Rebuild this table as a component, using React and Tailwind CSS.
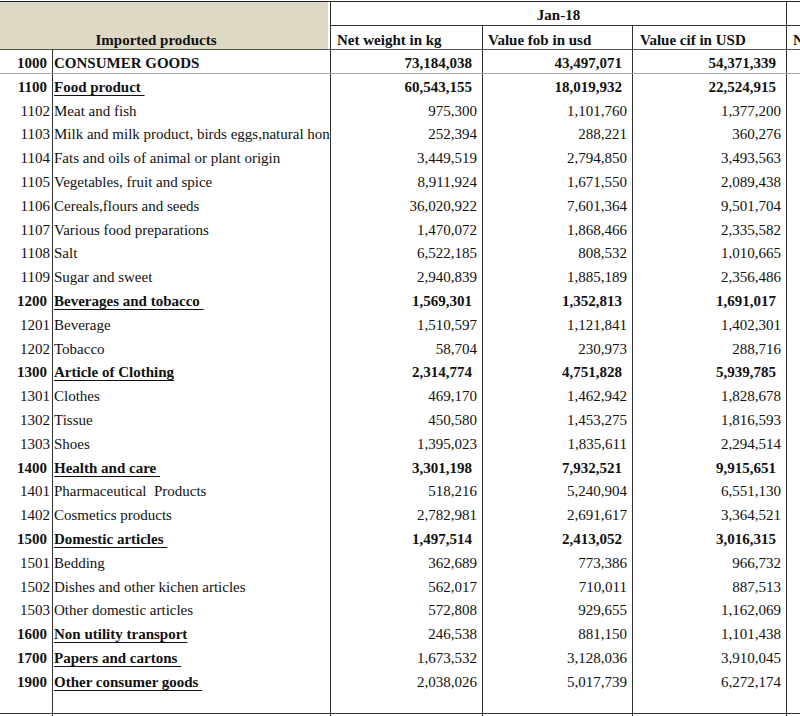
import React from "react";

const rows = [
  ["1000", "CONSUMER GOODS", "73,184,038", "43,497,071", "54,371,339", "top"],
  ["1100", "Food product\u00a0", "60,543,155", "18,019,932", "22,524,915", "cat"],
  ["1102", "Meat and fish", "975,300", "1,101,760", "1,377,200"],
  ["1103", "Milk and milk product, birds eggs,natural honey", "252,394", "288,221", "360,276"],
  ["1104", "Fats and oils of animal or plant origin", "3,449,519", "2,794,850", "3,493,563"],
  ["1105", "Vegetables, fruit and spice", "8,911,924", "1,671,550", "2,089,438"],
  ["1106", "Cereals,flours and seeds", "36,020,922", "7,601,364", "9,501,704"],
  ["1107", "Various food preparations", "1,470,072", "1,868,466", "2,335,582"],
  ["1108", "Salt", "6,522,185", "808,532", "1,010,665"],
  ["1109", "Sugar and sweet", "2,940,839", "1,885,189", "2,356,486"],
  ["1200", "Beverages and tobacco\u00a0", "1,569,301", "1,352,813", "1,691,017", "cat"],
  ["1201", "Beverage", "1,510,597", "1,121,841", "1,402,301"],
  ["1202", "Tobacco", "58,704", "230,973", "288,716"],
  ["1300", "Article of Clothing", "2,314,774", "4,751,828", "5,939,785", "cat"],
  ["1301", "Clothes", "469,170", "1,462,942", "1,828,678"],
  ["1302", "Tissue", "450,580", "1,453,275", "1,816,593"],
  ["1303", "Shoes", "1,395,023", "1,835,611", "2,294,514"],
  ["1400", "Health and care\u00a0", "3,301,198", "7,932,521", "9,915,651", "cat"],
  ["1401", "Pharmaceutical\u00a0 Products", "518,216", "5,240,904", "6,551,130"],
  ["1402", "Cosmetics products", "2,782,981", "2,691,617", "3,364,521"],
  ["1500", "Domestic articles\u00a0", "1,497,514", "2,413,052", "3,016,315", "cat"],
  ["1501", "Bedding", "362,689", "773,386", "966,732"],
  ["1502", "Dishes and other kichen articles", "562,017", "710,011", "887,513"],
  ["1503", "Other domestic articles", "572,808", "929,655", "1,162,069"],
  ["1600", "Non utility transport", "246,538", "881,150", "1,101,438", "catn"],
  ["1700", "Papers and cartons\u00a0", "1,673,532", "3,128,036", "3,910,045", "catn"],
  ["1900", "Other consumer goods\u00a0", "2,038,026", "5,017,739", "6,272,174", "catn"],
];

function Row({ r }) {
  const [code, name, a, b, c, kind] = r;
  const boldCode = !!kind;
  const boldName = !!kind;
  const underline = kind === "cat" || kind === "catn";
  const boldNum = kind === "top" || kind === "cat";
  const isTop = kind === "top";
  const numCls = boldNum ? "font-bold pr-[10px]" : "pr-[5px]";
  return (
    <div
      className={
        "flex shrink-0 " +
        (isTop ? "h-[24px] border-b border-[#a6a6a6]" : "h-[23.8px]")
      }
    >
      <div
        className={
          "w-[53px] shrink-0 border-r border-[#333] flex items-center justify-end pt-[3px] " +
          (boldCode ? "font-bold pr-[5px]" : "pr-[2px]")
        }
      >
        {code}
      </div>
      <div className="w-[278px] shrink-0 border-r border-[#333] flex items-center overflow-hidden whitespace-nowrap pl-[1px] pt-[3px]">
        <span
          className={
            (boldName ? "font-bold " : "") +
            (underline ? "underline decoration-1 underline-offset-[3px]" : "")
          }
        >
          {name}
        </span>
      </div>
      <div className={"w-[152px] shrink-0 border-r border-[#333] flex items-center justify-end pt-[3px] " + numCls}>
        {a}
      </div>
      <div className={"w-[150px] shrink-0 border-r border-[#333] flex items-center justify-end pt-[3px] " + numCls}>
        {b}
      </div>
      <div className={"w-[154px] shrink-0 border-r border-[#333] flex items-center justify-end pt-[3px] " + numCls}>
        {c}
      </div>
      <div className="w-[60px] shrink-0"></div>
    </div>
  );
}

export default function App() {
  return (
    <div
      className="w-[800px] h-[716px] overflow-hidden bg-white text-[#111] text-[15px] leading-none"
      style={{ fontFamily: '"Liberation Serif", "Times New Roman", serif' }}
    >
      <div className="pt-[1px]">
        <div className="w-[860px] border-t border-[#222]">
          {/* Header row 1 */}
          <div className="flex h-[24px]">
            <div className="w-[331px] shrink-0 border-r border-[#333] pr-[2px]">
              <div className="h-full bg-[#ddd9c4]"></div>
            </div>
            <div className="w-[456px] shrink-0 border-r border-b border-[#333] flex items-end justify-center pb-[2px] font-bold">
              Jan-18
            </div>
            <div className="w-[60px] shrink-0 border-b border-[#333]"></div>
          </div>
          {/* Header row 2 */}
          <div className="flex h-[24px] border-b border-[#555]">
            <div className="w-[331px] shrink-0 border-r border-[#333] pr-[2px]">
              <div className="h-full bg-[#ddd9c4] flex items-end justify-center pr-[16px] pb-[1px] font-bold">
                Imported products
              </div>
            </div>
            <div className="w-[152px] shrink-0 border-r border-[#333] flex items-end pl-[6px] pb-[1px] font-bold">
              Net weight in kg
            </div>
            <div className="w-[150px] shrink-0 border-r border-[#333] flex items-end pl-[5px] pb-[1px] font-bold">
              Value fob in usd
            </div>
            <div className="w-[154px] shrink-0 border-r border-[#333] flex items-end pl-[7px] pb-[1px] font-bold">
              Value cif in USD
            </div>
            <div className="w-[60px] shrink-0 flex items-end pl-[6px] pb-[1px] font-bold">
              Net
            </div>
          </div>
          {/* Body */}
          {rows.map((r) => (
            <Row key={r[0]} r={r} />
          ))}
          {/* Filler */}
          <div className="flex h-[21px] border-b border-[#333]">
            <div className="w-[53px] shrink-0 border-r border-[#333]"></div>
            <div className="w-[278px] shrink-0 border-r border-[#333]"></div>
            <div className="w-[152px] shrink-0 border-r border-[#333]"></div>
            <div className="w-[150px] shrink-0 border-r border-[#333]"></div>
            <div className="w-[154px] shrink-0 border-r border-[#333]"></div>
            <div className="w-[60px] shrink-0"></div>
          </div>
          <div className="flex h-[10px]">
            <div className="w-[53px] shrink-0 border-r border-[#333]"></div>
            <div className="w-[278px] shrink-0 border-r border-[#333]"></div>
            <div className="w-[152px] shrink-0 border-r border-[#333]"></div>
            <div className="w-[150px] shrink-0 border-r border-[#333]"></div>
            <div className="w-[154px] shrink-0 border-r border-[#333]"></div>
          </div>
        </div>
      </div>
    </div>
  );
}
